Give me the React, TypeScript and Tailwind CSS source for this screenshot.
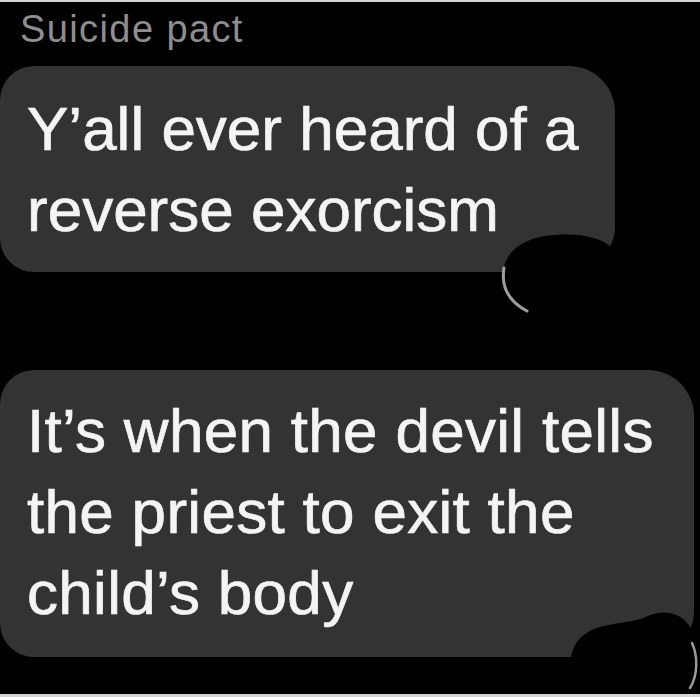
export default function App() {
  return (
    <div
      className="relative h-[697px] w-[700px] overflow-hidden border-t-2 border-b-[3px] border-[#d6d6d6] bg-black"
      style={{ fontFamily: '"Liberation Sans", Arial, sans-serif' }}
    >
      <div className="pl-5 pt-1 text-[38px] leading-[46px] tracking-[1.4px] text-[#8e8e8e]">
        Suicide pact
      </div>

      <div className="mt-[14px] w-[615px] rounded-[46px] rounded-l-[34px] bg-[#333333] pt-[22px] pb-[22px] pl-[27px] text-[62px] leading-[81px] text-[#f4f4f4] [-webkit-text-stroke:0.7px_#f4f4f4]">
        Y’all ever heard of a
        <br />
        reverse exorcism
      </div>

      <div className="mt-[98px] w-[694px] rounded-[46px] rounded-l-[34px] bg-[#333333] pt-5 pb-6 pl-[27px] text-[62px] leading-[81px] tracking-[0.3px] text-[#f4f4f4] [-webkit-text-stroke:0.7px_#f4f4f4]">
        It’s when the devil tells
        <br />
        the priest to exit the
        <br />
        child’s body
      </div>

      {/* blacked-out avatars sitting over the bubble corners */}
      <svg
        className="pointer-events-none absolute -top-[2px] left-0 h-[697px] w-[700px]"
        viewBox="0 0 700 697"
      >
        <path
          d="M503 276 C503 256 516 241 545 236 C575 232 600 236 612 248 L626 262 L626 320 L522 320 C509 306 503 292 503 276 Z"
          fill="#000"
        />
        <path d="M504 268 C501 286 508 301 527 311" fill="none" stroke="#c4c4c4" strokeWidth="3" strokeLinecap="round" opacity="0.8" />
        <path
          d="M571 662 C571 646 580 633 600 627 C616 622 634 623 648 616 C661 610 678 611 688 624 C696 634 700 644 700 650 L700 697 L571 697 Z"
          fill="#000"
        />
        <path d="M692 643 C698 656 698 675 690 688" fill="none" stroke="#b5b5b5" strokeWidth="2.5" strokeLinecap="round" opacity="0.85" />
      </svg>
    </div>
  )
}
